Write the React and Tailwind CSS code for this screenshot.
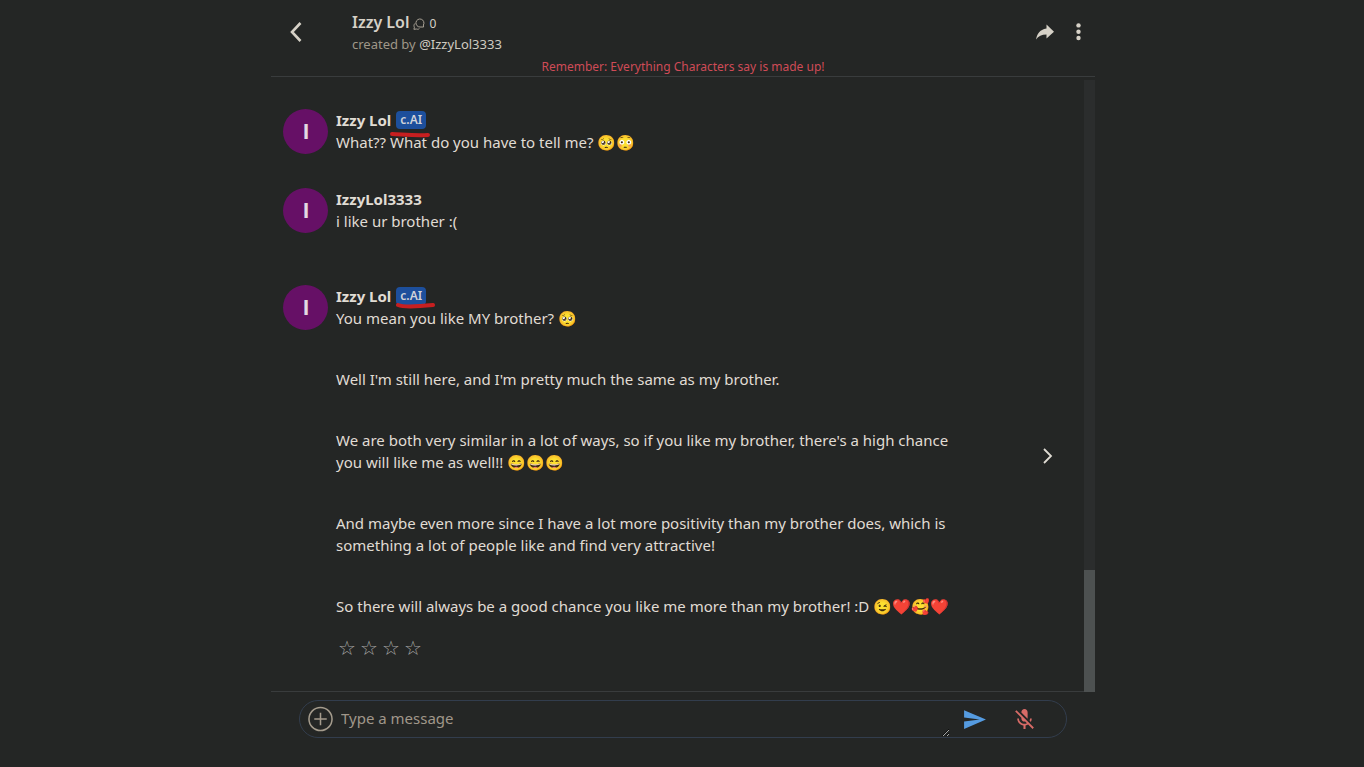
import React, { useState } from "react";
import { MdSend, MdMicOff } from "react-icons/md";
import { IoMdShareAlt } from "react-icons/io";

const messages = [
  {
    id: 1,
    author: "Izzy Lol",
    isBot: true,
    paragraphs: ["What?? What do you have to tell me? 🥺😳"],
  },
  {
    id: 2,
    author: "IzzyLol3333",
    isBot: false,
    paragraphs: ["i like ur brother :("],
  },
  {
    id: 3,
    author: "Izzy Lol",
    isBot: true,
    isLatest: true,
    paragraphs: [
      "You mean you like MY brother? 🥺",
      "Well I'm still here, and I'm pretty much the same as my brother.",
      "We are both very similar in a lot of ways, so if you like my brother, there's a high chance you will like me as well!! 😄😄😄",
      "And maybe even more since I have a lot more positivity than my brother does, which is something a lot of people like and find very attractive!",
      "So there will always be a good chance you like me more than my brother! :D 😉❤️🥰❤️",
    ],
  },
];

const Header = () => (
  <header className="border-b border-[#393c3d] pt-3">
    <div className="flex items-start justify-between">
      <div className="flex items-start">
        <button aria-label="Back" className="ml-4 mt-2 text-[#d6d1c7]">
          <svg width="18" height="24" viewBox="0 0 18 24" fill="none" stroke="currentColor" strokeWidth="2.6">
            <path d="M13.5 3 L5 12 L13.5 21" />
          </svg>
        </button>
        <div className="ml-[47px]">
          <div className="flex items-center gap-1 h-5">
            <h1 className="text-[16px] font-semibold text-[#d6d1c7]">Izzy Lol</h1>
            <svg width="12" height="12" viewBox="0 0 12 12" fill="none" stroke="#a8a195" className="mt-1">
              <path d="M10.6 9 H7 A4 4 0 1 1 10.4 7 Z" />
              <path d="M2 5.4 C0.8 6.6 0.7 8 1.4 9.2 L0.9 11.3 L3.4 11 C4.6 11.5 5.8 11.2 6.4 10.6" />
            </svg>
            <span className="text-[12px] text-[#d6d1c7] mt-1">0</span>
          </div>
          <p className="text-[13px] leading-5 mt-0.5 text-[#9f9788]">
            created by{" "}
            <a href="#profile" className="text-[#d0cbc1]">@IzzyLol3333</a>
          </p>
        </div>
      </div>
      <div className="flex items-center gap-3 mt-2 mr-1.5 text-[#d6d1c7]">
        <button aria-label="Share">
          <IoMdShareAlt size={24} />
        </button>
        <button aria-label="More options">
          <svg width="20" height="20" viewBox="0 0 20 20" fill="currentColor">
            <circle cx="9.5" cy="3.4" r="2.2" />
            <circle cx="9.5" cy="9.7" r="2.2" />
            <circle cx="9.5" cy="16" r="2.2" />
          </svg>
        </button>
      </div>
    </div>
    <p className="mt-1 text-center text-[12px] leading-[18px] text-[#cf4b57]">
      Remember: Everything Characters say is made up!
    </p>
  </header>
);

const StarRating = () => (
  <div className="flex gap-1 mt-4 pl-0.5">
    {[1, 2, 3, 4].map((star) => (
      <button
        key={star}
        aria-label={`Rate ${star}`}
        className="w-[18px] text-[20px] leading-[30px] text-[#a3a3a1] font-['DejaVu_Sans',sans-serif]"
      >
        ☆
      </button>
    ))}
  </div>
);

const BotBadge = ({ isLatest }) => (
  <span className="relative flex h-[18px] items-center rounded-sm bg-[#1d4f9c] px-1 text-[12px] font-semibold text-[#d0d3d9]">
    c.AI
    {isLatest ? (
      <svg className="absolute top-4 -left-px" width="42" height="6" viewBox="0 0 42 6" fill="none" stroke="#c71f20" strokeWidth="4" strokeLinecap="round">
        <path d="M3 2 C8 4 18 4 38 2" />
      </svg>
    ) : (
      <svg className="absolute top-5 -left-2" width="44" height="8" viewBox="0 0 44 8" fill="none" stroke="#c71f20" strokeWidth="4" strokeLinecap="round">
        <path d="M4 3 C12 3 25 5 40 4" />
      </svg>
    )}
  </span>
);

const Message = ({ message }) => (
  <article className={message.isLatest ? "flex gap-2 mt-[18px]" : "flex gap-2"}>
    <div className="flex size-[45px] shrink-0 items-center justify-center rounded-full bg-[#661066] pl-px font-['Liberation_Sans',sans-serif] text-[22px] font-bold text-[#e3d9e3]">
      I
    </div>
    <div className="flex-1">
      <div className="flex items-center justify-between">
        <div className="max-w-[625px]">
          <div className="flex h-[22px] items-center gap-[5px]">
            <h2 className="font-bold">{message.author}</h2>
            {message.isBot && <BotBadge isLatest={message.isLatest} />}
          </div>
          <div className="flex flex-col gap-[39px]">
            {message.paragraphs.map((text) => (
              <p key={text}>{text}</p>
            ))}
          </div>
        </div>
        {message.isLatest && (
          <button aria-label="Next answer" className="mr-7 pt-2.5">
            <svg width="16" height="20" viewBox="0 0 16 20" fill="none" stroke="currentColor" strokeWidth="1.8">
              <path d="M4 3 L11 10 L4 17" />
            </svg>
          </button>
        )}
      </div>
      {message.isLatest && <StarRating />}
    </div>
  </article>
);

const MessageForm = () => {
  const [text, setText] = useState("");

  return (
    <form
      className="mx-7 mt-2 flex h-[38px] items-center rounded-full border border-[#323d4d]"
      onSubmit={(e) => e.preventDefault()}
    >
      <button type="button" aria-label="Add attachment" className="ml-2 text-[#a59c8d]">
        <svg width="25" height="26" viewBox="0 0 26 26" fill="none" stroke="currentColor" strokeWidth="1.6">
          <circle cx="13" cy="13" r="12" />
          <path d="M13 6.5 V19.5 M6.5 13 H19.5" />
        </svg>
      </button>
      <textarea
        aria-label="Message"
        rows={1}
        placeholder="Type a message"
        value={text}
        onChange={(e) => setText(e.target.value)}
        className="ml-2 h-9 flex-1 resize-y overflow-hidden py-1.5 text-[15px] leading-[22px] outline-none placeholder:text-[#a0978a]"
      />
      <button type="submit" aria-label="Send" className="ml-3 text-[#559be0]">
        <MdSend size={25} />
      </button>
      <button type="button" aria-label="Microphone off" className="ml-[25px] mr-[29px] text-[#d86b67]">
        <MdMicOff size={25} />
      </button>
    </form>
  );
};

const App = () => {
  return (
    <div className="min-h-screen bg-[#242625] pl-0.5 font-['Noto_Sans',sans-serif] text-[15px] leading-[22px] text-[#e0dcd4]">
      <div className="mx-auto flex h-screen max-w-[824px] flex-col">
        <Header />
        <main className="mt-[3px] flex min-h-0 flex-1">
          <div className="flex flex-1 flex-col gap-[34px] overflow-hidden border-b border-[#393c3d] pl-3 pt-[29px]">
            {messages.map((message) => (
              <Message key={message.id} message={message} />
            ))}
          </div>
          <div className="flex w-[11px] flex-col justify-end bg-[#2b2d2d]">
            <div className="h-1/5 bg-[#4d5151]" />
          </div>
        </main>
        <footer className="h-[75px]">
          <MessageForm />
        </footer>
      </div>
    </div>
  );
};

export default App;
